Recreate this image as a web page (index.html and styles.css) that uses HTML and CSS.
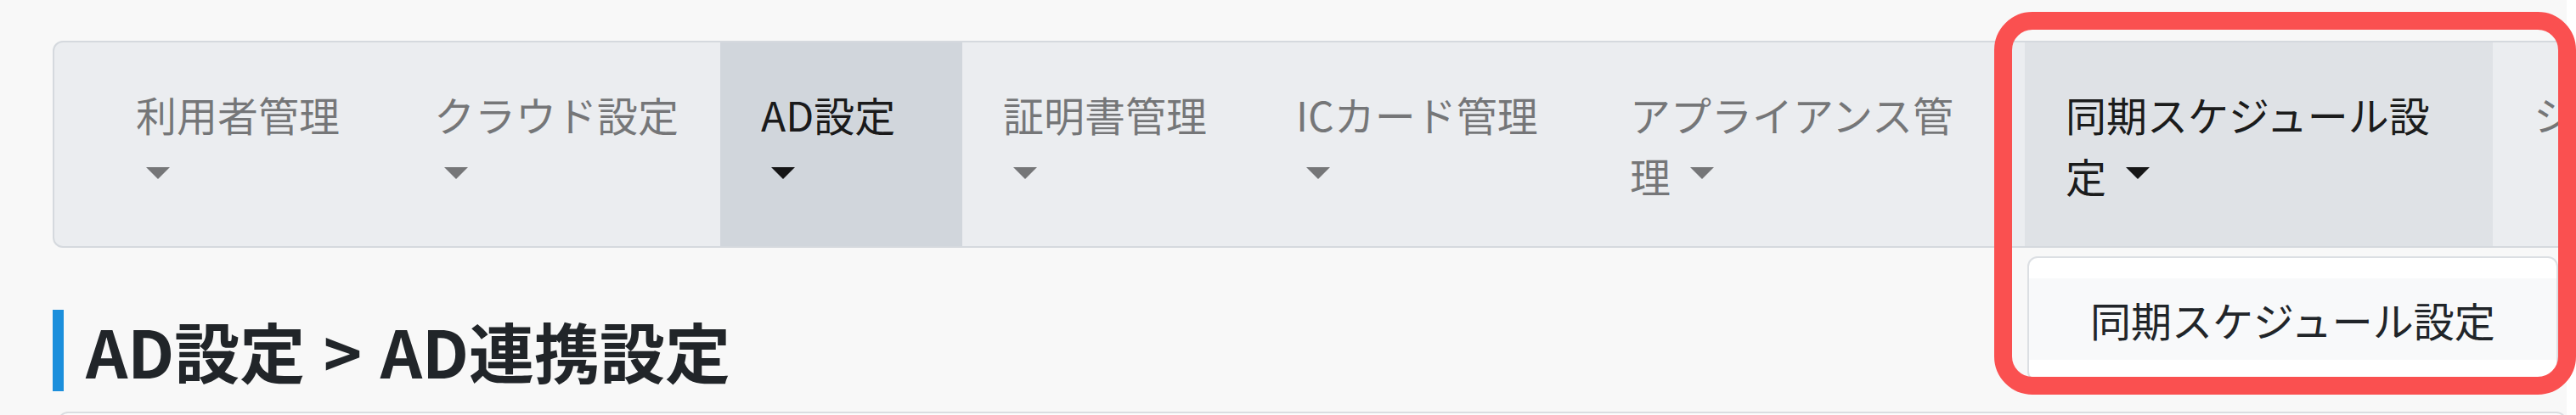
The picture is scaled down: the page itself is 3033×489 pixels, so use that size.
FILE: index.html
```html
<!DOCTYPE html>
<html lang="ja">
<head>
<meta charset="utf-8">
<title>AD連携設定</title>
<link rel="stylesheet" href="styles.css">
</head>
<body>
<div class="page">
  <nav class="navbar">
    <ul class="nav">
      <li class="nav-item w-user"><a class="nav-link">利用者管理 <span class="caret"></span></a></li>
      <li class="nav-item w-cloud"><a class="nav-link">クラウド設定 <span class="caret"></span></a></li>
      <li class="nav-item w-ad active"><a class="nav-link">AD設定 <span class="caret"></span></a></li>
      <li class="nav-item w-cert"><a class="nav-link">証明書管理 <span class="caret"></span></a></li>
      <li class="nav-item w-ic"><a class="nav-link">ICカード管理 <span class="caret"></span></a></li>
      <li class="nav-item w-appl"><a class="nav-link">アプライアンス管理 <span class="caret"></span></a></li>
      <li class="nav-item w-sync open">
        <a class="nav-link">同期スケジュール設定 <span class="caret"></span></a>
        <div class="dropdown-menu">
          <a class="dropdown-item">同期スケジュール設定</a>
        </div>
      </li>
      <li class="nav-item w-sys"><a class="nav-link">システム設定 <span class="caret"></span></a></li>
    </ul>
  </nav>
  <h1 class="page-title">AD設定 &gt; AD連携設定</h1>
  <div class="card"></div>
</div>
<div class="annotation"></div>
</body>
</html>
```
FILE: styles.css
```css
html, body {
  margin: 0;
  padding: 0;
}
body {
  background: #ffffff;
  width: 3033px;
  height: 489px;
  overflow: hidden;
  position: relative;
  font-family: "Noto Sans CJK JP", "Noto Sans", sans-serif;
  color: #212529;
}
.page {
  width: 2960px;
  height: 441px;
  padding: 48px 0 0 62px;
  background: #f8f8f8;
  overflow: hidden;
}
.navbar {
  width: 3200px;
  background: #ebedf0;
  border: 2px solid #d5d9de;
  border-radius: 12px;
  padding-left: 48px;
  box-sizing: border-box;
}
.nav {
  display: flex;
  list-style: none;
  margin: 0;
  padding: 0;
}
.nav-item {
  flex: none;
  position: relative;
  box-sizing: border-box;
  padding: 48px 48px;
  height: 240px;
  font-size: 48px;
  line-height: 72px;
}
.w-user { width: 351px; }
.w-cloud { width: 385px; }
.w-ad { width: 285px; }
.w-cert { width: 345px; }
.w-ic { width: 393px; }
.w-appl { width: 513px; }
.w-sync { width: 551px; }
.w-sys { width: 500px; }
.nav-link {
  color: rgba(0, 0, 0, 0.5);
  text-decoration: none;
  display: block;
}
.nav-item.active {
  background: #d1d6dc;
}
.nav-item.open {
  background: #dfe2e6;
}
.nav-item.active .nav-link,
.nav-item.open .nav-link {
  color: rgba(0, 0, 0, 0.9);
}
.caret {
  display: inline-block;
  width: 0;
  height: 0;
  margin-left: 0.255em;
  vertical-align: 0.34em;
  border-top: 0.3em solid;
  border-left: 0.3em solid transparent;
  border-right: 0.3em solid transparent;
}
.dropdown-menu {
  position: absolute;
  top: 252px;
  left: 3px;
  background: #ffffff;
  border: 2px solid #dcdfe3;
  border-radius: 12px;
  padding: 24px 0;
  white-space: nowrap;
}
.dropdown-item {
  display: block;
  padding: 12px 72px;
  background: #f8f9fa;
  color: #212529;
  font-size: 48px;
  line-height: 72px;
}
.page-title {
  margin: 73px 0 0;
  border-left: 13px solid #1c8fdc;
  padding-left: 26px;
  font-size: 77px;
  line-height: 96px;
  font-weight: 700;
  color: #212529;
  word-spacing: 4px;
}
.card {
  margin: 24px 0 0 6px;
  height: 60px;
  border: 2px solid #dadde1;
  border-radius: 12px;
  background: #fcfcfc;
}
.annotation {
  position: absolute;
  left: 2348px;
  top: 14px;
  width: 685px;
  height: 451px;
  box-sizing: border-box;
  border: 21px solid #fa5050;
  border-radius: 45px;
}
```
